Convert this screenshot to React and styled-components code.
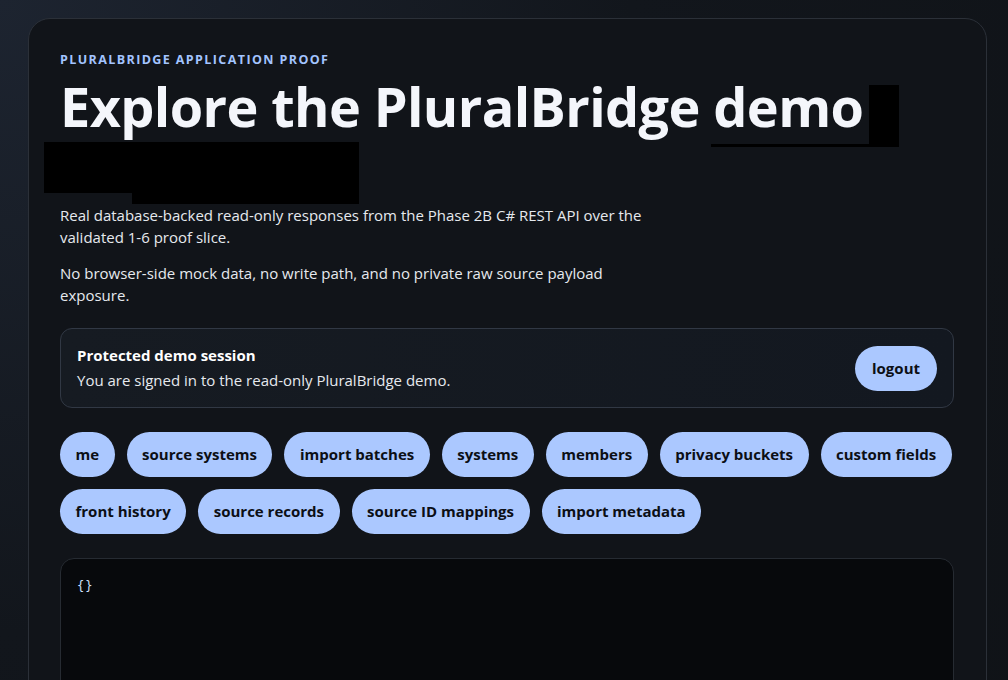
import React from "react";
import styled, { createGlobalStyle } from "styled-components";

const GlobalStyle = createGlobalStyle`
  html, body {
    margin: 0;
    padding: 0;
    background: radial-gradient(circle at 0% 0%, #1d2430 0%, #12161c 45%, #0f1216 100%);
    min-height: 100vh;
    color: #e8ebf0;
    font-family: "Open Sans", "Noto Sans", sans-serif;
  }
`;

const Page = styled.div`
  padding: 18px 21px 40px 28px;
`;

const Card = styled.section`
  position: relative;
  background: #111419;
  border: 1px solid #2b3038;
  border-radius: 22px;
  padding: 32px 32px 40px 31px;
`;

const Eyebrow = styled.div`
  font-size: 12.5px;
  font-weight: 700;
  letter-spacing: 1.4px;
  line-height: 18px;
  color: #a3c4ff;
  text-transform: uppercase;
`;

const Title = styled.h1`
  margin: 6px 0 67px;
  font-size: 54px;
  line-height: 62px;
  font-weight: 700;
  color: #f4f6fb;
  letter-spacing: -0.6px;
`;

const Para = styled.p`
  margin: 0 0 14px;
  max-width: 600px;
  font-size: 15px;
  line-height: 22px;
  color: #e6e9ee;
`;

const Session = styled.div`
  margin-top: 22px;
  display: flex;
  align-items: center;
  justify-content: space-between;
  padding: 16px 16px;
  border: 1px solid #313844;
  border-radius: 12px;
  background: linear-gradient(90deg, #161b22 0%, #131820 100%);
`;

const SessionTitle = styled.div`
  font-size: 15px;
  font-weight: 700;
  line-height: 20px;
  color: #ffffff;
`;

const SessionText = styled.div`
  margin-top: 4px;
  font-size: 15px;
  line-height: 22px;
  color: #e6e9ee;
`;

const Pill = styled.button`
  border: none;
  border-radius: 999px;
  background: #abc8ff;
  color: #0c0f15;
  font-family: inherit;
  font-size: 15px;
  font-weight: 700;
  line-height: 21px;
  padding: ${(p) => (p.$wide ? "12px 17px" : "12px 15.5px")};
  cursor: pointer;
`;

const Chips = styled.div`
  margin-top: 24px;
  display: flex;
  flex-wrap: wrap;
  gap: 12px;
`;

const Output = styled.pre`
  margin: 24px 0 0;
  min-height: 300px;
  padding: 18px 16px;
  background: #07090c;
  border: 1px solid #262b32;
  border-radius: 14px;
  font-family: "DejaVu Sans Mono", "Liberation Mono", monospace;
  font-size: 12px;
  line-height: 18px;
  letter-spacing: 1px;
  color: #cfe2ff;
`;

/* stray black render blocks that sit over the heading in the capture */
const Glitch = styled.span`
  position: absolute;
  background: #000;
`;

const endpoints = [
  "me",
  "source systems",
  "import batches",
  "systems",
  "members",
  "privacy buckets",
  "custom fields",
  "front history",
  "source records",
  "source ID mappings",
  "import metadata",
];

export default function App() {
  return (
    <>
      <GlobalStyle />
      <Page>
        <Card>
          <Eyebrow>PluralBridge application proof</Eyebrow>
          <Title>Explore the PluralBridge demo</Title>
          <Para>
            Real database-backed read-only responses from the Phase 2B C# REST API over the
            validated 1-6 proof slice.
          </Para>
          <Para>
            No browser-side mock data, no write path, and no private raw source payload
            exposure.
          </Para>
          <Session>
            <div>
              <SessionTitle>Protected demo session</SessionTitle>
              <SessionText>You are signed in to the read-only PluralBridge demo.</SessionText>
            </div>
            <Pill $wide>logout</Pill>
          </Session>
          <Chips>
            {endpoints.map((e) => (
              <Pill key={e}>{e}</Pill>
            ))}
          </Chips>
          <Output>{"{}"}</Output>
          <Glitch style={{ left: 15, top: 123, width: 88, height: 51 }} />
          <Glitch style={{ left: 103, top: 123, width: 227, height: 62 }} />
          <Glitch style={{ left: 840, top: 66, width: 30, height: 62 }} />
          <Glitch style={{ left: 682, top: 125, width: 158, height: 3 }} />
        </Card>
      </Page>
    </>
  );
}
